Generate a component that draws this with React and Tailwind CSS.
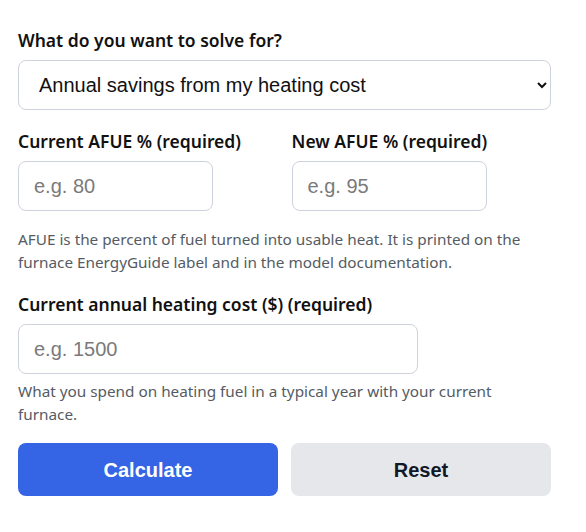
import React, { useState } from "react";

const labelCls =
  "block text-[17.5px] leading-[20px] font-semibold text-[#111111] mb-[10px]";
const inputCls =
  "h-[50px] rounded-lg border border-[#cdd2dc] bg-white px-[15px] text-[20px] text-[#222] placeholder:text-[#7a7a7a] outline-none";

function App() {
  const [mode, setMode] = useState("savings");
  const [current, setCurrent] = useState("");
  const [next, setNext] = useState("");
  const [cost, setCost] = useState("");

  const reset = () => {
    setCurrent("");
    setNext("");
    setCost("");
  };

  return (
    <div
      className="bg-white pl-[18px] pr-[35px] pt-[30px] w-[586px] h-[532px]"
      style={{ fontFamily: '"Noto Sans", "Open Sans", sans-serif' }}
    >
      {/* Solve for */}
      <label className={labelCls}>What do you want to solve for?</label>
      <select
        value={mode}
        onChange={(e) => setMode(e.target.value)}
        className="w-full h-[50px] rounded-lg border border-[#cdd2dc] bg-white pl-[16px] pr-[6px] text-[20px] text-[#111]"
        style={{ fontFamily: '"Liberation Sans", Arial, sans-serif' }}
      >
        <option value="savings">Annual savings from my heating cost</option>
        <option value="afue">Required AFUE for a target cost</option>
      </select>

      {/* AFUE inputs */}
      <div className="grid grid-cols-2 gap-x-[14px] mt-[21px]">
        <div>
          <label className={labelCls}>Current AFUE % (required)</label>
          <input
            value={current}
            onChange={(e) => setCurrent(e.target.value)}
            placeholder="e.g. 80"
            className={`${inputCls} w-[195px]`}
            style={{ fontFamily: '"Liberation Sans", Arial, sans-serif' }}
          />
        </div>
        <div>
          <label className={labelCls}>New AFUE % (required)</label>
          <input
            value={next}
            onChange={(e) => setNext(e.target.value)}
            placeholder="e.g. 95"
            className={`${inputCls} w-[195px]`}
            style={{ fontFamily: '"Liberation Sans", Arial, sans-serif' }}
          />
        </div>
      </div>
      <p className="mt-[17px] text-[15.3px] leading-[23px] text-[#555b63]">
        AFUE is the percent of fuel turned into usable heat. It is printed on the
        furnace EnergyGuide label and in the model documentation.
      </p>

      {/* Heating cost */}
      <div className="mt-[20px]">
        <label className={labelCls}>Current annual heating cost ($) (required)</label>
        <input
          value={cost}
          onChange={(e) => setCost(e.target.value)}
          placeholder="e.g. 1500"
          className={`${inputCls} w-[400px]`}
          style={{ fontFamily: '"Liberation Sans", Arial, sans-serif' }}
        />
      </div>
      <p className="mt-[6px] text-[15.3px] leading-[23px] text-[#555b63] pr-[40px]">
        What you spend on heating fuel in a typical year with your current
        furnace.
      </p>

      {/* Actions */}
      <div
        className="grid grid-cols-2 gap-x-[13px] mt-[17px]"
        style={{ fontFamily: '"Liberation Sans", Arial, sans-serif' }}
      >
        <button className="h-[53px] rounded-lg bg-[#3564e4] text-white text-[20px] font-bold">
          Calculate
        </button>
        <button
          onClick={reset}
          className="h-[53px] rounded-lg bg-[#e5e7eb] text-[#111827] text-[20px] font-bold"
        >
          Reset
        </button>
      </div>
    </div>
  );
}

export default App;
